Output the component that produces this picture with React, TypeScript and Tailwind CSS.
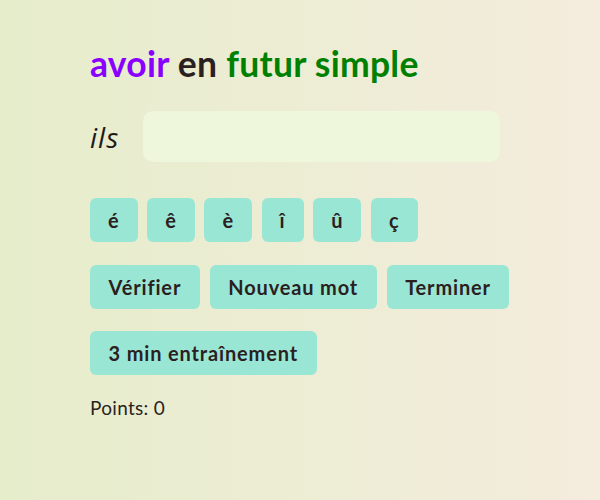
import React from "react";

const accents = ["é", "ê", "è", "î", "û", "ç"];

export default function App() {
  return (
    <div
      className="w-[600px] h-[500px] bg-gradient-to-r from-[#e6edcb] to-[#f4ecdd] text-[#2b1f1f]"
      style={{ fontFamily: "Lato, 'Noto Sans', sans-serif" }}
    >
      <div className="pl-[90px] pt-[42px]">
        <h1 className="text-[35.5px] font-bold leading-[44px] tracking-[0.25px]">
          <span className="text-[#8a00ff]">avoir</span>{" "}
          <span className="text-[#2b1f1f]">en</span>{" "}
          <span className="text-[#008000]">futur simple</span>
        </h1>
        <div className="mt-[25px] flex items-center gap-[20px]">
          <span
            className="text-[28px] italic font-normal w-[33px] tracking-[1px] text-[#1f1a1a]"
            style={{ fontFamily: "'Open Sans', cursive" }}
          >
            ils
          </span>
          <div className="w-[357px] h-[51px] rounded-[10px] bg-[#eef6dc]" />
        </div>
        <div className="mt-[36px] flex gap-[9.5px]">
          {accents.map((a) => (
            <button
              key={a}
              className="h-[44px] min-w-[42px] px-[18px] rounded-[6px] bg-[#9ae6d4] text-[20px] font-bold tracking-[1px]"
            >
              {a}
            </button>
          ))}
        </div>
        <div className="mt-[23px] flex flex-wrap gap-x-[10px] gap-y-[22px] w-[430px]">
          {["Vérifier", "Nouveau mot", "Terminer", "3 min entraînement"].map((t) => (
            <button
              key={t}
              className="h-[44px] px-[18.5px] rounded-[6px] bg-[#9ae6d4] text-[20px] font-bold tracking-[0.85px]"
            >
              {t}
            </button>
          ))}
        </div>
        <div className="mt-[22px] text-[19px] leading-[22px] tracking-[0.3px]">Points: 0</div>
      </div>
    </div>
  );
}
